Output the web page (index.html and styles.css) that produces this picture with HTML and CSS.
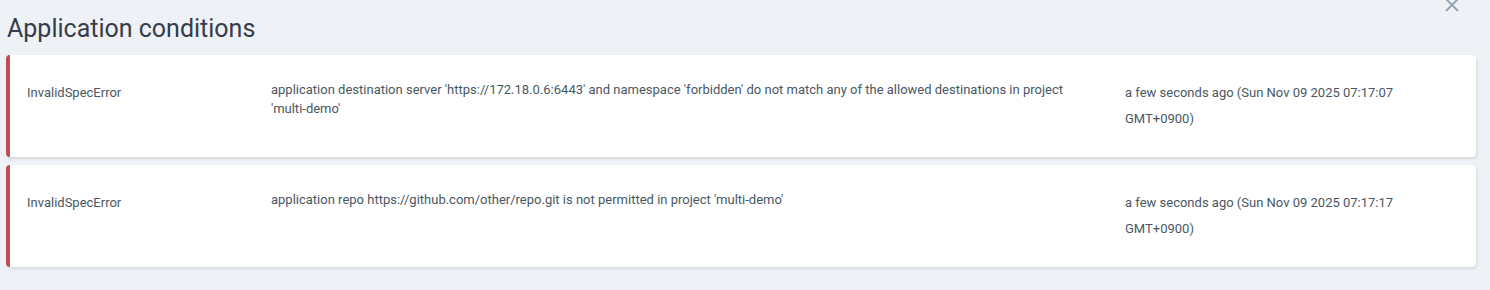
FILE: index.html
```html
<!DOCTYPE html>
<html lang="en">
<head>
    <meta charset="UTF-8">
    <title>Application conditions</title>
    <link rel="stylesheet" href="styles.css">
</head>
<body>
    <div class="panel">
        <button class="close-btn" title="Close">
            <svg width="14" height="14" viewBox="0 0 14 14"><path d="M1 1 L13 13 M13 1 L1 13" stroke="#8fa4b1" stroke-width="1.8" fill="none"/></svg>
        </button>
        <h1 class="panel-title">Application conditions</h1>

        <div class="condition">
            <div class="condition-type">InvalidSpecError</div>
            <div class="condition-message">application destination server 'https://172.18.0.6:6443' and namespace 'forbidden' do not match any of the allowed destinations in project 'multi-demo'</div>
            <div class="condition-time">a few seconds ago (Sun Nov 09 2025 07:17:07 GMT+0900)</div>
        </div>

        <div class="condition">
            <div class="condition-type">InvalidSpecError</div>
            <div class="condition-message">application repo https://github.com/other/repo.git is not permitted in project 'multi-demo'</div>
            <div class="condition-time">a few seconds ago (Sun Nov 09 2025 07:17:17 GMT+0900)</div>
        </div>
    </div>
</body>
</html>
```

FILE: styles.css
```css
body {
    margin: 0;
    padding: 0;
    background: #eef1f5;
    font-family: Roboto, "Liberation Sans", Arial, sans-serif;
    color: #495763;
}
.panel {
    position: relative;
    padding: 15px 14px 20px 6px;
}
.close-btn {
    position: absolute;
    top: -2px;
    right: 31px;
    padding: 0;
    border: none;
    background: none;
    cursor: pointer;
    line-height: 0;
}
.panel-title {
    margin: 0 0 12px 1px;
    font-size: 25px;
    font-weight: 400;
    line-height: 28px;
    color: #363c4a;
}
.condition {
    display: grid;
    grid-template-columns: 244px 854px 1fr;
    min-height: 77px;
    padding: 25px 17px 0 17px;
    margin-bottom: 8px;
    background: #fff;
    border-left: 4px solid #c44c51;
    border-radius: 4px;
    box-shadow: 1px 2px 3px rgba(0,0,0,0.1);
    font-size: 13px;
}
.condition-type {
    line-height: 26px;
}
.condition-message {
    line-height: 19px;
    padding-right: 40px;
}
.condition-time {
    line-height: 26px;
}
```
